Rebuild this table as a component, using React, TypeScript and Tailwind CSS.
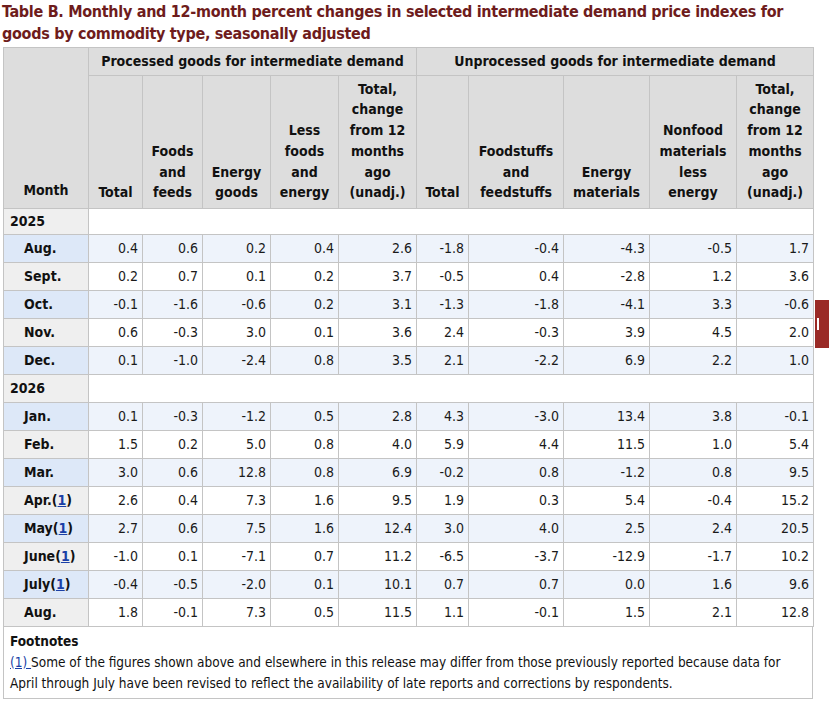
import React from "react";

type Row = { m: string; fn?: boolean; v: string[] };

const y2025: Row[] = [
  { m: "Aug.", v: ["0.4", "0.6", "0.2", "0.4", "2.6", "-1.8", "-0.4", "-4.3", "-0.5", "1.7"] },
  { m: "Sept.", v: ["0.2", "0.7", "0.1", "0.2", "3.7", "-0.5", "0.4", "-2.8", "1.2", "3.6"] },
  { m: "Oct.", v: ["-0.1", "-1.6", "-0.6", "0.2", "3.1", "-1.3", "-1.8", "-4.1", "3.3", "-0.6"] },
  { m: "Nov.", v: ["0.6", "-0.3", "3.0", "0.1", "3.6", "2.4", "-0.3", "3.9", "4.5", "2.0"] },
  { m: "Dec.", v: ["0.1", "-1.0", "-2.4", "0.8", "3.5", "2.1", "-2.2", "6.9", "2.2", "1.0"] },
];

const y2026: Row[] = [
  { m: "Jan.", v: ["0.1", "-0.3", "-1.2", "0.5", "2.8", "4.3", "-3.0", "13.4", "3.8", "-0.1"] },
  { m: "Feb.", v: ["1.5", "0.2", "5.0", "0.8", "4.0", "5.9", "4.4", "11.5", "1.0", "5.4"] },
  { m: "Mar.", v: ["3.0", "0.6", "12.8", "0.8", "6.9", "-0.2", "0.8", "-1.2", "0.8", "9.5"] },
  { m: "Apr.", fn: true, v: ["2.6", "0.4", "7.3", "1.6", "9.5", "1.9", "0.3", "5.4", "-0.4", "15.2"] },
  { m: "May", fn: true, v: ["2.7", "0.6", "7.5", "1.6", "12.4", "3.0", "4.0", "2.5", "2.4", "20.5"] },
  { m: "June", fn: true, v: ["-1.0", "0.1", "-7.1", "0.7", "11.2", "-6.5", "-3.7", "-12.9", "-1.7", "10.2"] },
  { m: "July", fn: true, v: ["-0.4", "-0.5", "-2.0", "0.1", "10.1", "0.7", "0.7", "0.0", "1.6", "9.6"] },
  { m: "Aug.", v: ["1.8", "-0.1", "7.3", "0.5", "11.5", "1.1", "-0.1", "1.5", "2.1", "12.8"] },
];

const widths = ["w-[85px]", "w-[54px]", "w-[60px]", "w-[68px]", "w-[68px]", "w-[78px]", "w-[52px]", "w-[95px]", "w-[86px]", "w-[87px]", "w-[77px]"];

const heads = [
  "Total",
  "Foods and feeds",
  "Energy goods",
  "Less foods and energy",
  "Total, change from 12 months ago (unadj.)",
  "Total",
  "Foodstuffs and feedstuffs",
  "Energy materials",
  "Nonfood materials less energy",
  "Total, change from 12 months ago (unadj.)",
];

const th = "border border-[#c4c4c4] bg-[#dddddd] font-bold text-center align-bottom px-[4px] pb-[5px] leading-[20.7px]";

function DataRows({ rows }: { rows: Row[] }) {
  return (
    <>
      {rows.map((r, i) => {
        const odd = i % 2 === 0;
        return (
          <tr key={r.m + i} className={`h-[28px] ${odd ? "bg-[#eef3fb]" : "bg-white"}`}>
            <th className={`border border-[#c4c4c4] text-left font-bold pl-[20px] ${odd ? "bg-[#dde8f8]" : "bg-[#efefef]"}`}>
              {r.m}
              {r.fn && (
                <>
                  (<span className="text-[#1a3fa6] underline">1</span>)
                </>
              )}
            </th>
            {r.v.map((v, j) => (
              <td key={j} className="border border-[#c4c4c4] text-right pr-[4px] text-[#1a1a1a]">
                {v}
              </td>
            ))}
          </tr>
        );
      })}
    </>
  );
}

function YearRow({ y, h }: { y: string; h: string }) {
  return (
    <tr className={h}>
      <th className="border border-[#c4c4c4] bg-[#efefef] text-left font-bold pl-[6px]">{y}</th>
      <td colSpan={10} className="border border-[#c4c4c4] bg-white" />
    </tr>
  );
}

export default function App() {
  return (
    <div className="relative w-[829px] h-[702px] bg-white overflow-hidden text-[#111] font-['DejaVu_Sans_Condensed','DejaVu_Sans',sans-serif]">
      <div className="pl-[2px] pt-[1px]">
        <h2 className="text-[16px] tracking-[-0.3px] font-bold leading-[22px] text-[#6e1c1c] w-[810px]">
          Table B. Monthly and 12-month percent changes in selected intermediate demand price indexes for goods by commodity type, seasonally adjusted
        </h2>
        <table className="mt-[2px] ml-[1px] border-collapse table-fixed w-[810px] text-[14px]">
          <colgroup>
            {widths.map((w, i) => (
              <col key={i} className={w} />
            ))}
          </colgroup>
          <thead>
            <tr className="h-[28px]">
              <th rowSpan={2} className={`${th} pb-[7px]`}>Month</th>
              <th colSpan={5} className="border border-[#c4c4c4] bg-[#dddddd] font-bold text-center">
                Processed goods for intermediate demand
              </th>
              <th colSpan={5} className="border border-[#c4c4c4] bg-[#dddddd] font-bold text-center">
                Unprocessed goods for intermediate demand
              </th>
            </tr>
            <tr className="h-[133px]">
              {heads.map((h, i) => (
                <th key={i} className={th}>
                  {h}
                </th>
              ))}
            </tr>
          </thead>
          <tbody>
            <YearRow y="2025" h="h-[26px]" />
            <DataRows rows={y2025} />
            <YearRow y="2026" h="h-[28px]" />
            <DataRows rows={y2026} />
          </tbody>
        </table>
        <div className="ml-[1px] w-[810px] border border-t-0 border-[#c4c4c4] px-[6px] pt-[4px] pb-[4px] text-[13.5px] leading-[21px]">
          <div className="font-bold">Footnotes</div>
          <p>
            <a className="text-[#1a3fa6] underline">(1) </a>Some of the figures shown above and elsewhere in this release may differ from those previously reported because data for April through July have been revised to reflect the availability of late reports and corrections by respondents.
          </p>
        </div>
      </div>
      <div className="absolute left-[815px] top-[300px] w-[14px] h-[48px] bg-[#9a2a26]">
        <div className="ml-[2px] mt-[18px] w-[2px] h-[12px] bg-white" />
      </div>
    </div>
  );
}
